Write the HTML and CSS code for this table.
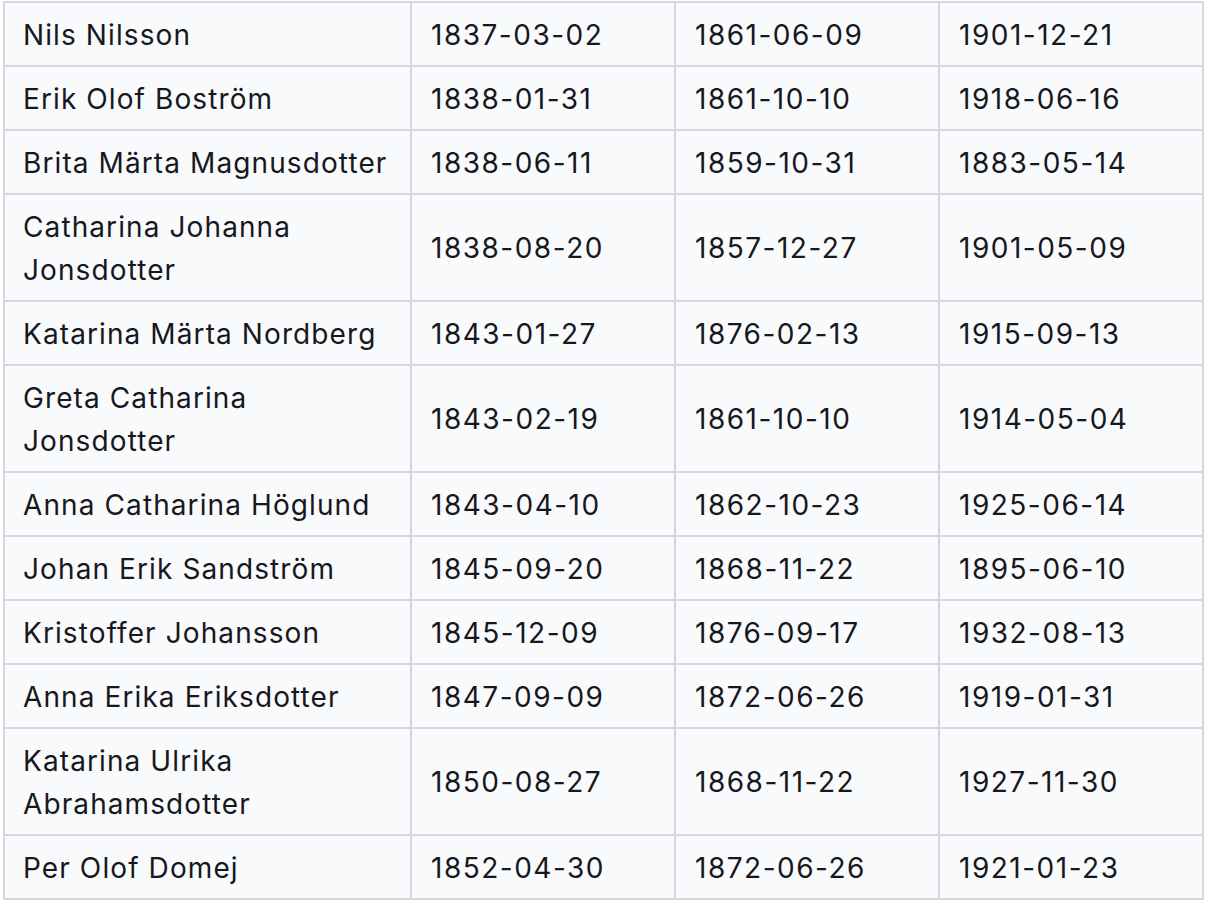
FILE: index.html
```html
<!DOCTYPE html>
<html lang="sv">
<head>
<meta charset="utf-8">
<title>Personer</title>
<link rel="stylesheet" href="styles.css">
</head>
<body>
<table class="people">
  <colgroup>
    <col class="c-name">
    <col class="c-date">
    <col class="c-date">
    <col class="c-date">
  </colgroup>
  <tbody>
    <tr><td>Nils Nilsson</td><td class="date">1837-03-02</td><td class="date">1861-06-09</td><td class="date">1901-12-21</td></tr>
    <tr><td>Erik Olof Boström</td><td class="date">1838-01-31</td><td class="date">1861-10-10</td><td class="date">1918-06-16</td></tr>
    <tr><td>Brita Märta Magnusdotter</td><td class="date">1838-06-11</td><td class="date">1859-10-31</td><td class="date">1883-05-14</td></tr>
    <tr><td>Catharina Johanna Jonsdotter</td><td class="date">1838-08-20</td><td class="date">1857-12-27</td><td class="date">1901-05-09</td></tr>
    <tr><td>Katarina Märta Nordberg</td><td class="date">1843-01-27</td><td class="date">1876-02-13</td><td class="date">1915-09-13</td></tr>
    <tr><td>Greta Catharina Jonsdotter</td><td class="date">1843-02-19</td><td class="date">1861-10-10</td><td class="date">1914-05-04</td></tr>
    <tr><td>Anna Catharina Höglund</td><td class="date">1843-04-10</td><td class="date">1862-10-23</td><td class="date">1925-06-14</td></tr>
    <tr><td>Johan Erik Sandström</td><td class="date">1845-09-20</td><td class="date">1868-11-22</td><td class="date">1895-06-10</td></tr>
    <tr><td>Kristoffer Johansson</td><td class="date">1845-12-09</td><td class="date">1876-09-17</td><td class="date">1932-08-13</td></tr>
    <tr><td>Anna Erika Eriksdotter</td><td class="date">1847-09-09</td><td class="date">1872-06-26</td><td class="date">1919-01-31</td></tr>
    <tr><td>Katarina Ulrika Abrahamsdotter</td><td class="date">1850-08-27</td><td class="date">1868-11-22</td><td class="date">1927-11-30</td></tr>
    <tr><td>Per Olof Domej</td><td class="date">1852-04-30</td><td class="date">1872-06-26</td><td class="date">1921-01-23</td></tr>
  </tbody>
</table>
</body>
</html>
```
FILE: styles.css
```css
html, body {
  margin: 0;
  padding: 0;
  background: #ffffff;
}

body {
  padding: 1px 0 0 3px;
}

.people {
  table-layout: fixed;
  width: 1201px;
  border-collapse: separate;
  border-spacing: 0;
  border-top: 2px solid #d5d7de;
  border-left: 2px solid #d5d7de;
  background: #f9fafc;
  font-family: "Inter", "Noto Sans", sans-serif;
  font-size: 28px;
  letter-spacing: 1.1px;
  line-height: 43px;
  color: #16181d;
}

.c-name { width: 407px; }
.c-date { width: 264px; }

.people td {
  box-sizing: border-box;
  padding: 10.5px 18px 8.5px;
  border-right: 2px solid #d5d7de;
  border-bottom: 2px solid #d5d7de;
  vertical-align: middle;
  text-align: left;
}

.people td.date {
  letter-spacing: 1.5px;
  padding-left: 19px;
}
```
